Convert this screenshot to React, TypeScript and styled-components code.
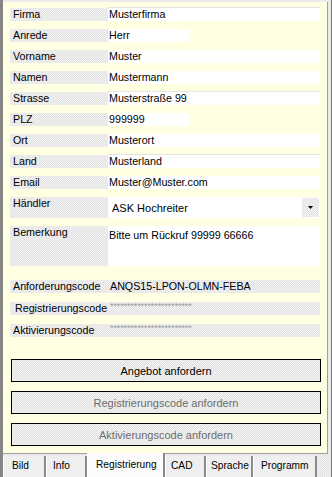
import React from 'react';
import styled, { createGlobalStyle, css } from 'styled-components';

const GlobalStyle = createGlobalStyle`
  html, body {
    margin: 0;
    padding: 0;
    background: #f0f0f0;
  }
  * {
    box-sizing: border-box;
  }
`;

const hatch = css`
  background: repeating-conic-gradient(#e2e2e2 0% 25%, #f3f3f3 0% 50%) 0 0 / 2px 2px;
`;

const Window = styled.div`
  width: 332px;
  height: 477px;
  display: flex;
  flex-direction: column;
  border-left: 3px solid #858585;
  border-right: 1px solid #7a7a7a;
  padding-top: 2px;
  padding-right: 3px;
  overflow: hidden;
  font-family: 'Liberation Sans', Arial, sans-serif;
  color: #000;
  ${hatch}
`;

const Panel = styled.div`
  flex: 1;
  display: flex;
  flex-direction: column;
  background: #ffffe1;
  border-right: 1px solid #a0a0a0;
  border-bottom: 1px solid #a0a0a0;
  padding: 6px 0 0 7px;
`;

const Form = styled.div`
  display: flex;
  flex-direction: column;
  gap: 8px;
`;

const Row = styled.div<{ $h?: number; $mt?: number }>`
  display: flex;
  height: ${(p) => p.$h ?? 13}px;
  margin-top: ${(p) => p.$mt ?? 0}px;
`;

const Label = styled.div<{ $indent?: number }>`
  width: 98px;
  padding-left: ${(p) => p.$indent ?? 3}px;
  font-size: 10.7px;
  line-height: 13px;
  white-space: nowrap;
  ${hatch}
`;

const Field = styled.div<{ $short?: boolean; $dotted?: boolean }>`
  width: ${(p) => (p.$short ? 81 : 212)}px;
  height: 100%;
  background: #fff;
  padding-left: 1px;
  font-size: 10.7px;
  line-height: 13px;
  white-space: nowrap;
  overflow: hidden;
  ${(p) =>
    p.$dotted &&
    css`
      box-shadow: 0 -1px 0 0 #e4e4e4;
    `}
`;

const CodeValue = styled.div`
  width: 212px;
  padding-left: 2px;
  font-size: 10.7px;
  line-height: 13px;
  white-space: nowrap;
  overflow: hidden;
  ${hatch}
`;

const Masked = styled.span`
  font-size: 9px;
  line-height: 9px;
  color: #9a9a9a;
  vertical-align: top;
  letter-spacing: -0.1px;
`;

const Combo = styled.div`
  width: 212px;
  height: 100%;
  background: #fff;
  display: flex;
  align-items: center;
  justify-content: space-between;
  padding: 1px 1px 1px 4px;
  font-size: 11px;
`;

const DropButton = styled.div`
  width: 17px;
  height: 100%;
  display: flex;
  align-items: center;
  justify-content: center;
  ${hatch}
`;

const Memo = styled.div`
  width: 212px;
  height: 100%;
  background: #fff;
  padding: 3px 0 0 1px;
  font-size: 10.7px;
  line-height: 13px;
`;

const Buttons = styled.div`
  display: flex;
  flex-direction: column;
  gap: 9px;
  margin-top: 22px;
  padding-left: 1px;
`;

const Button = styled.button<{ $disabled?: boolean }>`
  width: 310px;
  height: 23px;
  border: 1px solid #000;
  padding: 0;
  font-family: 'Liberation Sans', Arial, sans-serif;
  font-size: 11px;
  color: ${(p) => (p.$disabled ? '#6d6d6d' : '#000')};
  ${hatch}
`;

const TabBar = styled.div`
  height: 23px;
  display: flex;
  align-items: flex-start;
  margin-right: -3px;
`;

const Tab = styled.div<{ $w: number; $pad: number; $active?: boolean }>`
  width: ${(p) => p.$w}px;
  height: ${(p) => (p.$active ? 24 : 21)}px;
  margin-top: ${(p) => (p.$active ? -1 : 2)}px;
  padding: ${(p) => (p.$active ? 5 : 3)}px 0 0 ${(p) => p.$pad}px;
  font-size: 10.2px;
  line-height: 13px;
  white-space: nowrap;
  background: ${(p) => (p.$active ? '#fbfbfb' : '#efefef')};
  border-left: 1px solid #fff;
  border-right: 2px solid #8a8a8a;
`;

const fields: { label: string; value: string; short?: boolean; dotted?: boolean }[] = [
  { label: 'Firma', value: 'Musterfirma', dotted: true },
  { label: 'Anrede', value: 'Herr', short: true },
  { label: 'Vorname', value: 'Muster' },
  { label: 'Namen', value: 'Mustermann' },
  { label: 'Strasse', value: 'Musterstraße 99', dotted: true },
  { label: 'PLZ', value: '999999', short: true },
  { label: 'Ort', value: 'Musterort' },
  { label: 'Land', value: 'Musterland', dotted: true },
  { label: 'Email', value: 'Muster@Muster.com' },
];

const tabs = [
  { name: 'Bild', w: 43, pad: 8 },
  { name: 'Info', w: 41, pad: 6 },
  { name: 'Registrierung', w: 78, pad: 8 },
  { name: 'CAD', w: 41, pad: 5 },
  { name: 'Sprache', w: 47, pad: 4 },
  { name: 'Programm', w: 64, pad: 7 },
];

const stars = '*'.repeat(24);

export default function App() {
  return (
    <>
      <GlobalStyle />
      <Window>
        <Panel>
          <Form>
            {fields.map((f) => (
              <Row key={f.label}>
                <Label>{f.label}</Label>
                <Field $short={f.short} $dotted={f.dotted}>
                  {f.value}
                </Field>
              </Row>
            ))}
            <Row $h={21}>
              <Label>Händler</Label>
              <Combo>
                <span>ASK Hochreiter</span>
                <DropButton>
                  <svg width="5" height="3" viewBox="0 0 5 3">
                    <path d="M0 0h5L2.5 3z" fill="#000" />
                  </svg>
                </DropButton>
              </Combo>
            </Row>
            <Row $h={40}>
              <Label>Bemerkung</Label>
              <Memo>Bitte um Rückruf 99999 66666</Memo>
            </Row>
            <Row $mt={6}>
              <Label>Anforderungscode</Label>
              <CodeValue>ANQS15-LPON-OLMN-FEBA</CodeValue>
            </Row>
            <Row $mt={1}>
              <Label $indent={5}>Registrierungscode</Label>
              <CodeValue>
                <Masked>{stars}</Masked>
              </CodeValue>
            </Row>
            <Row $mt={1}>
              <Label>Aktivierungscode</Label>
              <CodeValue>
                <Masked>{stars}</Masked>
              </CodeValue>
            </Row>
          </Form>
          <Buttons>
            <Button>Angebot anfordern</Button>
            <Button $disabled>Registrierungscode anfordern</Button>
            <Button $disabled>Aktivierungscode anfordern</Button>
          </Buttons>
        </Panel>
        <TabBar>
          {tabs.map((t) => (
            <Tab key={t.name} $w={t.w} $pad={t.pad} $active={t.name === 'Registrierung'}>
              {t.name}
            </Tab>
          ))}
        </TabBar>
      </Window>
    </>
  );
}
